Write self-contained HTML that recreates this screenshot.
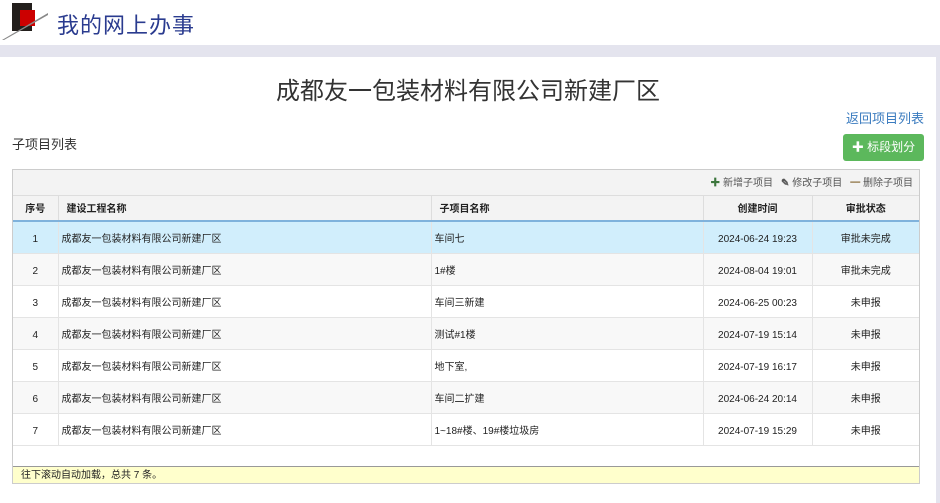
<!DOCTYPE html>
<html><head><meta charset="utf-8"><style>
*{margin:0;padding:0;box-sizing:border-box}
body{width:940px;height:503px;background:#e4e4ee;font-family:"Liberation Sans","Noto Sans CJK SC",sans-serif;position:relative;overflow:hidden}
.hdr{position:absolute;left:0;top:0;width:940px;height:45px;background:#fff}
.hdr .t{position:absolute;left:57px;top:8px;font-size:22px;letter-spacing:1px;color:#2a3b8f}
.panel{position:absolute;left:0;top:57px;width:936px;height:446px;background:#fff}
h1{position:absolute;left:0;width:936px;top:71px;text-align:center;font-size:24px;font-weight:normal;color:#333}
.back{position:absolute;right:16px;top:108px;font-size:13px;color:#3a7bbf}
.sub{position:absolute;left:12px;top:134px;font-size:13px;color:#333}
.btn{position:absolute;left:843px;top:134px;width:81px;height:27px;background:#5cb85c;border-radius:3px;color:#fff;font-size:12px;line-height:27px;text-align:center}
.tbl{position:absolute;left:12px;top:169px;width:908px;height:315px;border:1px solid #ccc;background:#fff}
.tb{height:26px;background:#f3f3f3;border-bottom:1px solid #ddd;font-size:10px;color:#555;text-align:right;padding-right:6px;line-height:28px}
.tb span{margin-left:8px}
table{border-collapse:collapse;width:906px;font-size:10px;color:#222;table-layout:fixed}
th{height:25px;background:#f3f3f3;font-weight:bold;border-right:1px solid #ddd;border-bottom:2px solid #7fb2dc;text-align:left;padding-left:8px;padding-top:4px;vertical-align:middle;line-height:12px}
td{height:32px;border-right:1px solid #e4e4e4;border-bottom:1px solid #e4e4e4;padding-left:3px;padding-top:5px;vertical-align:middle;line-height:12px;white-space:nowrap}
th:last-child,td:last-child{border-right:none}
.c{text-align:center;padding-left:0}
tr.odd td{background:#f8f8f8}
tr.sel td{background:#d1eefc}
.ft{position:absolute;left:0;bottom:0;width:906px;height:17px;background:#ffffcc;border-top:1px solid #999;font-size:10px;line-height:17px;padding-left:8px;color:#222}
</style></head><body>
<div class="hdr">
<svg width="50" height="42" style="position:absolute;left:0;top:0"><rect x="12" y="3" width="20" height="28" fill="#231f1c"/><rect x="20" y="10" width="15" height="16" fill="#c00"/><polygon points="2,40 48,13 48,15 4,40" fill="#888"/></svg>
<div class="t">我的网上办事</div></div>
<div class="panel"></div>
<h1>成都友一包装材料有限公司新建厂区</h1>
<div class="back">返回项目列表</div>
<div class="sub">子项目列表</div>
<div class="btn"><b>✚</b> 标段划分</div>
<div class="tbl">
<div class="tb"><span><b style="color:#3c763d">✚</b> 新增子项目</span><span><b style="color:#555">✎</b> 修改子项目</span><span><b style="color:#8a6d3b">━</b> 删除子项目</span></div>
<table>
<colgroup><col style="width:45px"><col style="width:373px"><col style="width:272px"><col style="width:109px"><col></colgroup>
<tr><th class="c" style="padding-left:0">序号</th><th>建设工程名称</th><th>子项目名称</th><th class="c" style="padding-left:0">创建时间</th><th class="c" style="padding-left:0">审批状态</th></tr>
<tr class="sel"><td class="c">1</td><td>成都友一包装材料有限公司新建厂区</td><td>车间七</td><td class="c">2024-06-24 19:23</td><td class="c">审批未完成</td></tr>
<tr class="odd"><td class="c">2</td><td>成都友一包装材料有限公司新建厂区</td><td>1#楼</td><td class="c">2024-08-04 19:01</td><td class="c">审批未完成</td></tr>
<tr><td class="c">3</td><td>成都友一包装材料有限公司新建厂区</td><td>车间三新建</td><td class="c">2024-06-25 00:23</td><td class="c">未申报</td></tr>
<tr class="odd"><td class="c">4</td><td>成都友一包装材料有限公司新建厂区</td><td>测试#1楼</td><td class="c">2024-07-19 15:14</td><td class="c">未申报</td></tr>
<tr><td class="c">5</td><td>成都友一包装材料有限公司新建厂区</td><td>地下室,</td><td class="c">2024-07-19 16:17</td><td class="c">未申报</td></tr>
<tr class="odd"><td class="c">6</td><td>成都友一包装材料有限公司新建厂区</td><td>车间二扩建</td><td class="c">2024-06-24 20:14</td><td class="c">未申报</td></tr>
<tr><td class="c">7</td><td>成都友一包装材料有限公司新建厂区</td><td>1~18#楼、19#楼垃圾房</td><td class="c">2024-07-19 15:29</td><td class="c">未申报</td></tr>
</table>
<div class="ft">往下滚动自动加载，总共 7 条。</div>
</div>
</body></html>
